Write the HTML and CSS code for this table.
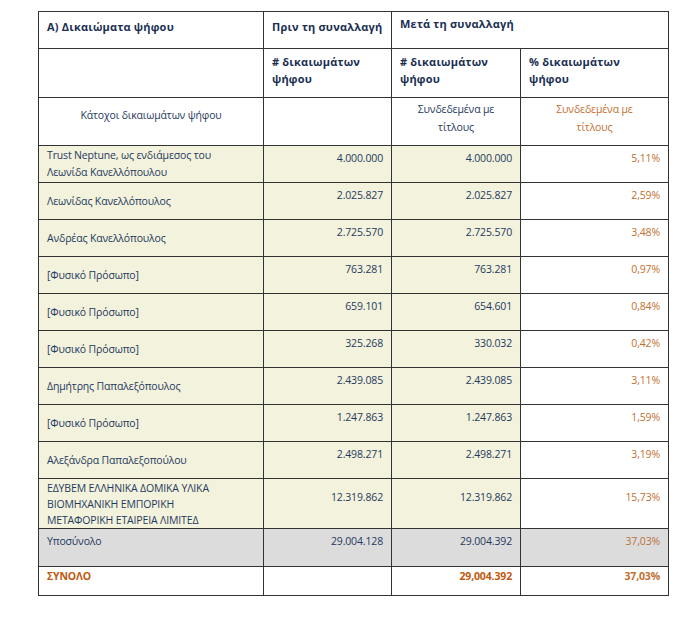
FILE: index.html
```html
<!DOCTYPE html>
<html lang="el">
<head>
<meta charset="utf-8">
<link rel="stylesheet" href="styles.css">
</head>
<body>
<table class="rights">
  <colgroup>
    <col class="c-name">
    <col class="c-before">
    <col class="c-after">
    <col class="c-pct">
  </colgroup>
  <tr class="h1">
    <th class="hd">Α) Δικαιώματα ψήφου</th>
    <th class="hd">Πριν τη συναλλαγή</th>
    <th class="hd hd-up" colspan="2">Μετά τη συναλλαγή</th>
  </tr>
  <tr class="h2">
    <th></th>
    <th class="hd"># δικαιωμάτων<br>ψήφου</th>
    <th class="hd"># δικαιωμάτων<br>ψήφου</th>
    <th class="hd orange">% δικαιωμάτων<br>ψήφου</th>
  </tr>
  <tr class="h3">
    <td class="center">Κάτοχοι δικαιωμάτων ψήφου</td>
    <td></td>
    <td class="center top">Συνδεδεμένα με<br>τίτλους</td>
    <td class="center top orange-l">Συνδεδεμένα με<br>τίτλους</td>
  </tr>
  <tr class="row r2">
    <td class="name">Trust Neptune, ως ενδιάμεσος του<br>Λεωνίδα Κανελλόπουλου</td>
    <td class="num">4.000.000</td>
    <td class="num">4.000.000</td>
    <td class="pct">5,11%</td>
  </tr>
  <tr class="row">
    <td class="name">Λεωνίδας Κανελλόπουλος</td>
    <td class="num">2.025.827</td>
    <td class="num">2.025.827</td>
    <td class="pct">2,59%</td>
  </tr>
  <tr class="row">
    <td class="name">Ανδρέας Κανελλόπουλος</td>
    <td class="num">2.725.570</td>
    <td class="num">2.725.570</td>
    <td class="pct">3,48%</td>
  </tr>
  <tr class="row">
    <td class="name">[Φυσικό Πρόσωπο]</td>
    <td class="num">763.281</td>
    <td class="num">763.281</td>
    <td class="pct">0,97%</td>
  </tr>
  <tr class="row">
    <td class="name">[Φυσικό Πρόσωπο]</td>
    <td class="num">659.101</td>
    <td class="num">654.601</td>
    <td class="pct">0,84%</td>
  </tr>
  <tr class="row">
    <td class="name">[Φυσικό Πρόσωπο]</td>
    <td class="num">325.268</td>
    <td class="num">330.032</td>
    <td class="pct">0,42%</td>
  </tr>
  <tr class="row">
    <td class="name">Δημήτρης Παπαλεξόπουλος</td>
    <td class="num">2.439.085</td>
    <td class="num">2.439.085</td>
    <td class="pct">3,11%</td>
  </tr>
  <tr class="row">
    <td class="name">[Φυσικό Πρόσωπο]</td>
    <td class="num">1.247.863</td>
    <td class="num">1.247.863</td>
    <td class="pct">1,59%</td>
  </tr>
  <tr class="row">
    <td class="name">Αλεξάνδρα Παπαλεξοπούλου</td>
    <td class="num">2.498.271</td>
    <td class="num">2.498.271</td>
    <td class="pct">3,19%</td>
  </tr>
  <tr class="row r3">
    <td class="name caps">ΕΔΥΒΕΜ ΕΛΛΗΝΙΚΑ ΔΟΜΙΚΑ ΥΛΙΚΑ<br>ΒΙΟΜΗΧΑΝΙΚΗ ΕΜΠΟΡΙΚΗ<br>ΜΕΤΑΦΟΡΙΚΗ ΕΤΑΙΡΕΙΑ ΛΙΜΙΤΕΔ</td>
    <td class="num mid">12.319.862</td>
    <td class="num mid">12.319.862</td>
    <td class="pct mid">15,73%</td>
  </tr>
  <tr class="sub">
    <td class="name top">Υποσύνολο</td>
    <td class="num">29.004.128</td>
    <td class="num">29.004.392</td>
    <td class="pct">37,03%</td>
  </tr>
  <tr class="total">
    <td class="name top bold orange">ΣΥΝΟΛΟ</td>
    <td></td>
    <td class="num bold orange">29,004.392</td>
    <td class="pct bold orange">37,03%</td>
  </tr>
</table>
</body>
</html>
```

FILE: styles.css
```css
html, body {
  margin: 0;
  padding: 0;
  background: #ffffff;
}

body {
  font-family: "Open Sans", "Noto Sans", sans-serif;
  font-size: 10.5px;
  letter-spacing: -0.15px;
  color: #1f3a60;
}

.rights {
  margin: 11px 0 0 38px;
  border-collapse: collapse;
  table-layout: fixed;
  width: 630px;
  border: 1.5px solid #555;
}

.c-name { width: 225px; }
.c-before { width: 128px; }
.c-after { width: 129px; }
.c-pct { width: 148px; }

.rights th,
.rights td {
  border: 1px solid #333;
  padding: 0 8px;
  line-height: 17px;
  vertical-align: top;
  text-align: left;
  font-weight: normal;
}

.rights th.hd {
  font-weight: 700;
  font-size: 11px;
  letter-spacing: 0.2px;
  white-space: nowrap;
  color: #1a2f52;
  padding-top: 6px;
}

.rights th.hd-up {
  padding-top: 3px;
}

.h1 { height: 37px; }
.h2 { height: 49px; }
.h3 { height: 48px; }

.rights .h2 th.hd { padding-top: 4px; }

.rights td.center {
  text-align: center;
  vertical-align: middle;
  padding-bottom: 12px;
}

.rights td.center.top {
  vertical-align: top;
  padding-top: 0;
  padding-bottom: 0;
}

.rights .h3 td.center.top {
  padding-top: 2px;
  line-height: 18px;
}

.rights .orange { color: #c05a0f; }
.rights .orange-l { color: #c2702f; }

.row { height: 37px; background: #f3f2dc; }
.row td.pct { background: #ffffff; }
.r3 { height: 48px; }

.rights td.name {
  vertical-align: middle;
  padding-top: 0;
}

.rights td.caps {
  line-height: 16px;
  padding-top: 1px;
  vertical-align: top;
  padding-right: 4px;
}

.rights td.num,
.rights td.pct {
  text-align: right;
  vertical-align: top;
  padding-top: 4px;
}

.rights td.pct {
  color: #c2702f;
}

.rights td.mid {
  padding-top: 10px;
}

.sub { height: 38px; background: #dcdcdc; }
.rights .sub td.pct { color: #b9733c; }
.rights .sub td.top { vertical-align: top; padding-top: 4px; }

.total { height: 29px; background: #ffffff; }
.rights .total td.top { vertical-align: top; padding-top: 1px; }
.rights .total td.num,
.rights .total td.pct { padding-top: 1px; }

.rights .bold { font-weight: 700; color: #c05a0f; }
```
